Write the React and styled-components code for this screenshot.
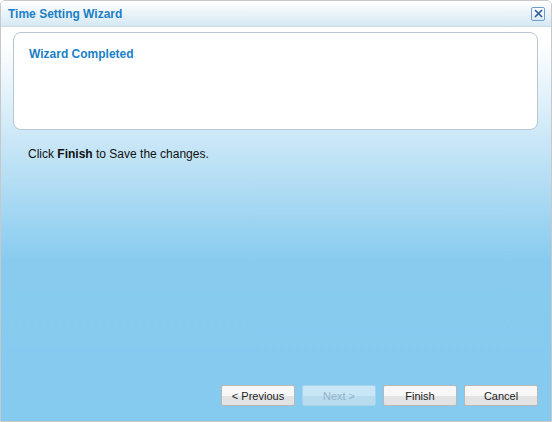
import React from "react";
import styled, { createGlobalStyle } from "styled-components";

const Global = createGlobalStyle`
  html, body { margin: 0; padding: 0; background: #fff; }
  body { font-family: "Liberation Sans", Arial, sans-serif; }
`;

const Win = styled.div`
  width: 552px; height: 422px; box-sizing: border-box;
  border: 1px solid #c8c8c8; border-radius: 5px 5px 0 0;
  display: flex; flex-direction: column; overflow: hidden;
  background: linear-gradient(to bottom, #ffffff 0px, #ffffff 40px, #c4e4f6 150px, #88cbef 260px, #85caef 100%);
`;
const TitleBar = styled.div`
  height: 25px; flex: none; display: flex; align-items: center; justify-content: space-between;
  padding: 0 6px 0 7px;
  background: linear-gradient(to bottom, #ffffff, #d6e8f4);
  border-bottom: 1px solid #c6dcea;
`;
const Title = styled.div`
  font-size: 12px; font-weight: bold; color: #1c7fc4;
`;
const Close = styled.div`
  width: 12px; height: 12px; border: 1px solid #6c9ed0; border-radius: 2px;
  background: linear-gradient(#fff, #dce9f6);
  display: flex; align-items: center; justify-content: center;
`;
const Body = styled.div`
  flex: 1; display: flex; flex-direction: column; padding: 5px 13px 15px 12px;
`;
const Panel = styled.div`
  height: 98px; background: #fff; border: 1px solid #b7c6d2; border-radius: 8px;
  padding: 14px 15px; box-sizing: border-box;
`;
const Heading = styled.div`
  font-size: 12px; font-weight: bold; color: #1a7fc6;
`;
const Msg = styled.div`
  margin-top: 17px; margin-left: 15px; font-size: 12px; color: #111;
`;
const Footer = styled.div`
  margin-top: auto; display: flex; justify-content: flex-end; gap: 7px;
`;
const Btn = styled.div`
  width: 74px; height: 21px; box-sizing: border-box;
  border: 1px solid ${p => (p.disabled ? "#a9d3ea" : "#b8b8b8")};
  border-radius: 2px;
  background: ${p => p.disabled
    ? "linear-gradient(#c9e6f6 50%, #b8dbee 50%)"
    : "linear-gradient(#f7f7f7 50%, #e3e3e3 50%)"};
  color: ${p => (p.disabled ? "#92b2c6" : "#222")};
  font-size: 11px; display: flex; align-items: center; justify-content: center;
`;

export default function App() {
  return (
    <>
      <Global />
      <Win>
        <TitleBar>
          <Title>Time Setting Wizard</Title>
          <Close>
            <svg width="9" height="9" viewBox="0 0 9 9">
              <path d="M1 1L8 8M8 1L1 8" stroke="#2a5a9a" strokeWidth="1.6" />
            </svg>
          </Close>
        </TitleBar>
        <Body>
          <Panel><Heading>Wizard Completed</Heading></Panel>
          <Msg>Click <b>Finish</b> to Save the changes.</Msg>
          <Footer>
            <Btn>&lt; Previous</Btn>
            <Btn disabled>Next &gt;</Btn>
            <Btn>Finish</Btn>
            <Btn>Cancel</Btn>
          </Footer>
        </Body>
      </Win>
    </>
  );
}
